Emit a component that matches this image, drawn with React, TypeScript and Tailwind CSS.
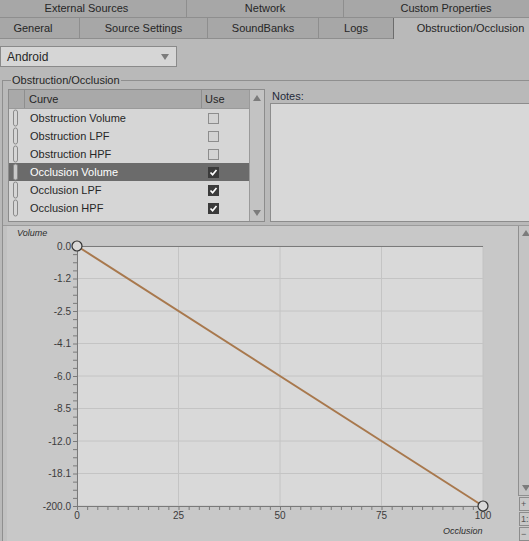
import React from 'react';

const tabsTop = [
  { label: 'External Sources', cls: 'w-[200px] border-r' },
  { label: 'Network', cls: 'w-[157px] border-r' },
  { label: 'Custom Properties', cls: 'w-[204px]' },
];

const tabsBottom = [
  { label: 'General', cls: 'w-[93px] border-r border-b bg-[#a7a7a7]' },
  { label: 'Source Settings', cls: 'w-[128px] border-r border-b bg-[#a7a7a7]' },
  { label: 'SoundBanks', cls: 'w-[111px] border-r border-b bg-[#a7a7a7]' },
  { label: 'Logs', cls: 'w-[74px] border-b bg-[#a7a7a7]' },
  { label: 'Obstruction/Occlusion', cls: 'w-[154px] border-l border-l-[#6c6c6c] bg-[#b9b9b9]' },
];

const curves = [
  { name: 'Obstruction Volume', use: false, sel: false },
  { name: 'Obstruction LPF', use: false, sel: false },
  { name: 'Obstruction HPF', use: false, sel: false },
  { name: 'Occlusion Volume', use: true, sel: true },
  { name: 'Occlusion LPF', use: true, sel: false },
  { name: 'Occlusion HPF', use: true, sel: false },
];

const yLabels = ['0.0', '-1.2', '-2.5', '-4.1', '-6.0', '-8.5', '-12.0', '-18.1', '-200.0'];

const Grip: React.FC<{ sel: boolean }> = ({ sel }) => (
  <svg width="6" height="18" className="block">
    <rect x="0.5" y="1" width="4" height="16" rx="2" fill={sel ? '#c9c9c9' : 'none'} stroke="#8a8a8a" strokeWidth="1" />
  </svg>
);

const Check: React.FC<{ on: boolean }> = ({ on }) =>
  on ? (
    <span className="flex h-[11px] w-[11px] items-center justify-center border border-[#3a3a3a] bg-[#3a3a3a]">
      <svg width="9" height="9" viewBox="0 0 9 9">
        <polyline points="1.5,4.5 3.6,6.8 7.5,2" fill="none" stroke="#ffffff" strokeWidth="1.7" />
      </svg>
    </span>
  ) : (
    <span className="block h-[11px] w-[11px] border border-[#8d8d8d] bg-[#d3d3d3]" />
  );

const Arrow: React.FC<{ up?: boolean }> = ({ up }) => (
  <svg width="8" height="6" viewBox="0 0 8 6" className="block">
    <polygon points={up ? '4,0 8,6 0,6' : '0,0 8,0 4,6'} fill="#7c7c7c" />
  </svg>
);

const CurveChart: React.FC = () => {
  const x0 = 70;
  const x1 = 476;
  const y0 = 20;
  const y1 = 280;
  const step = (y1 - y0) / 8;
  const xs = [0, 25, 50, 75, 100].map((v) => x0 + ((x1 - x0) * v) / 100);

  return (
    <svg width="511" height="315" className="block">
      <rect x={x0} y={y0} width={x1 - x0} height={y1 - y0} fill="#d9d9d9" stroke="#c2c2c2" />
      {yLabels.slice(1, 8).map((_, i) => (
        <line key={`h${i}`} x1={x0} x2={x1} y1={y0 + step * (i + 1)} y2={y0 + step * (i + 1)} stroke="#c4c4c4" />
      ))}
      {xs.slice(1, 4).map((x) => (
        <line key={`v${x}`} x1={x} x2={x} y1={y0} y2={y1} stroke="#c4c4c4" />
      ))}
      <line x1={x0} x2={x1} y1={y0 + 0.5} y2={y0 + 0.5} stroke="#7a7a7a" />
      <line x1={x0 + 0.5} x2={x0 + 0.5} y1={y0} y2={y1} stroke="#7a7a7a" />
      <line x1={x0} x2={x1} y1={y1 + 0.5} y2={y1 + 0.5} stroke="#7a7a7a" />
      {Array.from({ length: 33 }).map((_, i) => (
        <line key={`ly${i}`} x1={x0 - 4} x2={x0} y1={y0 + (step / 4) * i + 0.5} y2={y0 + (step / 4) * i + 0.5} stroke="#7a7a7a" />
      ))}
      {Array.from({ length: 41 }).map((_, i) => (
        <line key={`lx${i}`} x1={x0 + ((x1 - x0) / 40) * i + 0.5} x2={x0 + ((x1 - x0) / 40) * i + 0.5} y1={y1} y2={y1 + 4} stroke="#7a7a7a" />
      ))}
      {yLabels.map((l, i) => (
        <text key={l} x={x0 - 6} y={y0 + step * i + 3.5} textAnchor="end" fontSize="10" fill="#3c3c3c" fontFamily="Liberation Sans, sans-serif">
          {l}
        </text>
      ))}
      {[0, 25, 50, 75, 100].map((v, i) => (
        <text key={v} x={xs[i]} y={y1 + 13} textAnchor="middle" fontSize="10" fill="#3c3c3c" fontFamily="Liberation Sans, sans-serif">
          {v}
        </text>
      ))}
      <text x="10" y="10" fontSize="9" fontStyle="italic" fill="#2e2e2e" fontFamily="Liberation Sans, sans-serif">
        Volume
      </text>
      <text x="436" y="308" fontSize="9" fontStyle="italic" fill="#2e2e2e" fontFamily="Liberation Sans, sans-serif">
        Occlusion
      </text>
      <line x1={x0} y1={y0} x2={x1} y2={y1} stroke="#a8784d" strokeWidth="2" />
      <circle cx={x0} cy={y0} r="5" fill="#d9d9d9" stroke="#333333" strokeWidth="1.2" />
      <circle cx={x1} cy={y1} r="5" fill="#d9d9d9" stroke="#333333" strokeWidth="1.2" />
    </svg>
  );
};

export default function App() {
  return (
    <div className="flex h-[541px] w-[529px] flex-col overflow-hidden bg-[#b9b9b9] font-['Liberation_Sans',Arial,sans-serif] text-[11px] text-[#262626]">
      <div className="-ml-[13px] flex h-[18px] shrink-0 border-b border-[#8e8e8e] bg-[#a7a7a7]">
        {tabsTop.map((t) => (
          <div key={t.label} className={`flex shrink-0 items-center justify-center border-[#8e8e8e] ${t.cls}`}>
            {t.label}
          </div>
        ))}
      </div>
      <div className="-ml-[13px] flex h-[21px] shrink-0">
        {tabsBottom.map((t) => (
          <div key={t.label} className={`flex shrink-0 items-center justify-center border-[#8e8e8e] ${t.cls}`}>
            {t.label}
          </div>
        ))}
      </div>

      <div className="mt-[7px] flex h-[21px] w-[177px] shrink-0 items-center justify-between border border-[#8a8a8a] bg-[#d6d6d6] pl-[6px] pr-[7px] text-[12px]">
        <span>Android</span>
        <Arrow />
      </div>

      <div className="relative ml-[2px] mt-[13px] flex flex-1 flex-col border-l border-t border-[#8f8f8f]">
        <span className="absolute -top-[8px] left-[8px] bg-[#b9b9b9] px-[1px] leading-[14px]">Obstruction/Occlusion</span>

        <div className="flex pl-[5px] pt-[8px]">
          <div className="flex h-[133px] w-[257px] shrink-0 border border-[#8c8c8c] bg-[#d6d6d6]">
            <div className="flex flex-1 flex-col">
              <div className="flex h-[19px] shrink-0 border-b border-[#9a9a9a] bg-[#a9a9a9]">
                <div className="w-[16px] shrink-0 border-r border-[#8e8e8e]" />
                <div className="flex w-[177px] shrink-0 items-center border-r border-[#8e8e8e] pl-[4px]">Curve</div>
                <div className="flex flex-1 items-center pl-[3px]">Use</div>
              </div>
              {curves.map((c) => (
                <div key={c.name} className={`flex h-[18px] shrink-0 items-center ${c.sel ? 'bg-[#6b6b6b] text-white' : ''}`}>
                  <div className="w-[16px] shrink-0 pl-[4px]">
                    <Grip sel={c.sel} />
                  </div>
                  <div className="w-[177px] shrink-0 pl-[5px]">{c.name}</div>
                  <div className="flex flex-1 pl-[6px]">
                    <Check on={c.use} />
                  </div>
                </div>
              ))}
            </div>
            <div className="flex w-[15px] shrink-0 flex-col items-center justify-between border-l border-[#9a9a9a] bg-[#c3c3c3] py-[5px]">
              <Arrow up />
              <Arrow />
            </div>
          </div>

          <div className="ml-[5px] flex flex-1 flex-col">
            <div className="h-[14px] shrink-0 pl-[2px] leading-[14px] text-[#1f2a3a]">Notes:</div>
            <div className="flex-1 border border-r-0 border-[#8c8c8c] bg-[#d8d8d8]" />
          </div>
        </div>

        <div className="mt-[3px] flex flex-1 border-t border-[#9b9b9b] bg-[#c1c1c1] pl-[4px]">
          <div className="bg-[#c8c8c8]">
            <CurveChart />
          </div>
          <div className="flex flex-1 flex-col overflow-hidden bg-[#c8c8c8]">
            <div className="flex flex-1 flex-col justify-between border-b border-l border-[#8f8f8f] bg-[#c4c4c4] py-[4px] pl-[3px]">
              <Arrow up />
              <Arrow />
            </div>
            {['+', '1:1', '−'].map((b) => (
              <div key={b} className="ml-[1px] mt-[1px] flex h-[14px] w-[10px] shrink-0 items-center overflow-hidden whitespace-nowrap border border-r-0 border-[#8c8c8c] bg-[#c8c8c8] pl-[1px] text-[9px] leading-none text-[#555]">
                {b}
              </div>
            ))}
          </div>
        </div>
      </div>
    </div>
  );
}
